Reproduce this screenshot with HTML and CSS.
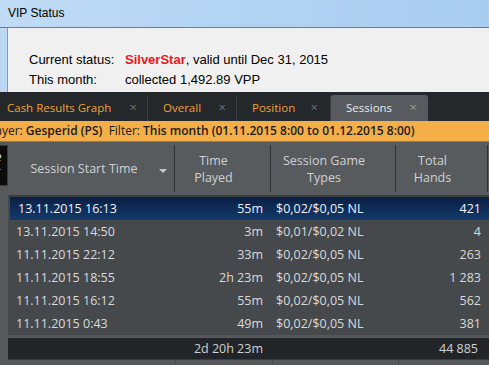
FILE: index.html
```html
<!DOCTYPE html>
<html lang="en">
<head>
  <meta charset="UTF-8">
  <meta name="viewport" content="width=device-width, initial-scale=1.0">
  <title>Sessions</title>
  <link rel="stylesheet" href="styles.css">
</head>
<body>
  <div class="vip">
    <div class="vip-title">VIP Status</div>
    <div class="vip-body">
      <div class="vip-row">
        <span class="vip-label">Current status:</span>
        <span><b class="status">SilverStar</b>, valid until Dec 31, 2015</span>
      </div>
      <div class="vip-row">
        <span class="vip-label">This month:</span>
        <span>collected 1,492.89 VPP</span>
      </div>
    </div>
  </div>

  <div class="tabs">
    <div class="tab first">Cash Results Graph <span class="close">&times;</span></div>
    <div class="tab second">Overall <span class="close">&times;</span></div>
    <div class="tab third">Position <span class="close">&times;</span></div>
    <div class="tab active">Sessions <span class="close">&times;</span></div>
  </div>

  <div class="filter">
    <span class="filter-text">Player: <b>Gesperid (PS)</b> &nbsp;Filter: <b>This month (01.11.2015 8:00 to 01.12.2015 8:00)</b></span>
  </div>

  <div class="grid-area">
    <div class="side">
      <div class="side-tab"><span>Stats</span></div>
    </div>
    <div class="grid">
      <div class="head">
        <div class="hcell c1">Session Start Time <span class="arrow"></span></div>
        <div class="hcell c2">Time<br>Played</div>
        <div class="hcell c3">Session Game<br>Types</div>
        <div class="hcell c4">Total<br>Hands</div>
      </div>
      <div class="rows" id="rows">
        <!-- rows filled by script -->
      </div>
      <div class="row total">
        <div class="cell c1"></div>
        <div class="cell c2 num">2d 20h 23m</div>
        <div class="cell c3"></div>
        <div class="cell c4 num">44 885</div>
      </div>
      <div class="foot">
        <div class="c1"></div>
        <div class="c2"></div>
        <div class="c3"></div>
        <div class="c4"></div>
      </div>
    </div>
  </div>

  <script>
    const sessions = [
      ['13.11.2015 16:13', '55m', '$0,02/$0,05 NL', '421'],
      ['13.11.2015 14:50', '3m', '$0,01/$0,02 NL', '4'],
      ['11.11.2015 22:12', '33m', '$0,02/$0,05 NL', '263'],
      ['11.11.2015 18:55', '2h 23m', '$0,02/$0,05 NL', '1 283'],
      ['11.11.2015 16:12', '55m', '$0,02/$0,05 NL', '562'],
      ['11.11.2015 0:43', '49m', '$0,02/$0,05 NL', '381']
    ];

    const rows = document.getElementById('rows');
    sessions.forEach((s, i) => {
      const row = document.createElement('div');
      row.className = i === 0 ? 'row selected' : 'row';
      row.innerHTML = `
        <div class="cell c1">${s[0]}</div>
        <div class="cell c2 num">${s[1]}</div>
        <div class="cell c3">${s[2]}</div>
        <div class="cell c4 num">${s[3]}</div>
      `;
      rows.appendChild(row);
    });
  </script>
</body>
</html>
```

FILE: styles.css
```css
body {
  margin: 0;
  width: 489px;
  height: 365px;
  overflow: hidden;
  background-color: #56595c;
}

.vip {
  height: 92px;
  background: linear-gradient(90deg, #bcd8f3, #b4d2f1 60%, #a9cbee);
  font-family: "Liberation Sans", Arial, sans-serif;
  color: #000;
}

.vip-title {
  height: 27px;
  line-height: 27px;
  padding-left: 8px;
  font-size: 12px;
  border-bottom: 1px solid #6d7c8c;
  background: linear-gradient(90deg, #c0dbf5, #b3d3f3 50%, #a9cdf0);
}

.vip-body {
  margin-left: 7px;
  height: 64px;
  border-left: 1px solid #8d99a6;
  background-color: #f0f0f0;
  padding-top: 22px;
  box-sizing: border-box;
  font-size: 13px;
}

.vip-row {
  display: flex;
  height: 20px;
  line-height: 20px;
  padding-left: 21px;
}

.vip-label {
  width: 96px;
}

.status {
  color: #ec1620;
}

.tabs {
  display: flex;
  align-items: flex-end;
  height: 29px;
  background-color: #25282b;
  font-family: "Open Sans", sans-serif;
  font-size: 11.5px;
  overflow: hidden;
}

.tab {
  height: 26px;
  line-height: 25px;
  color: #f0a232;
  box-sizing: border-box;
  border-right: 1px solid #3b3e42;
  white-space: nowrap;
  display: flex;
  justify-content: space-between;
}

.tab .close {
  color: #6e7175;
  font-size: 13px;
}

.tab.first {
  width: 148px;
  padding: 0 10px 0 7px;
}

.tab.second {
  width: 89px;
  padding: 0 10px 0 15px;
}

.tab.third {
  width: 94px;
  padding: 0 12px 0 15px;
}

.tab.active {
  width: 97px;
  height: 26px;
  padding: 0 11px 0 15px;
  background-color: #575b5f;
  color: #eaeaea;
  border-radius: 3px 3px 0 0;
  border-right: none;
}

.tab.active .close {
  color: #9a9da0;
}

.filter {
  height: 20px;
  line-height: 20px;
  background-color: #f4af48;
  border-bottom: 1px solid #a8783a;
  overflow: hidden;
  white-space: nowrap;
  font-family: "Open Sans", sans-serif;
  font-size: 12px;
  color: #1b1b1b;
}

.filter-text {
  margin-left: -15px;
}

.filter b {
  font-weight: 600;
}

.grid-area {
  display: flex;
  height: 224px;
  font-family: "Open Sans", sans-serif;
}

.side {
  width: 8px;
  padding-top: 3px;
}

.side-tab {
  width: 8px;
  height: 41px;
  background-color: #0c0c0c;
  border: 1px solid #3a3a3a;
  border-left: none;
  box-sizing: border-box;
  overflow: hidden;
  position: relative;
}

.side-tab span {
  position: absolute;
  left: -14px;
  top: 14px;
  transform: rotate(90deg);
  color: #ffffff;
  font-size: 10px;
  line-height: 10px;
}

.grid {
  flex: 1;
  display: flex;
  flex-direction: column;
}

.c1 { width: 167px; }
.c2 { width: 96px; }
.c3 { width: 125px; }
.c4 { width: 92px; }

.head {
  display: flex;
  height: 55px;
  padding-top: 3px;
  box-sizing: border-box;
  border-bottom: 2px solid #3c3f42;
  background-color: #585b5e;
}

.hcell {
  box-sizing: border-box;
  border-right: 1px solid #2f3235;
  display: flex;
  align-items: center;
  justify-content: center;
  text-align: center;
  padding-right: 18px;
  color: #cfd1d3;
  font-size: 12.5px;
  line-height: 17px;
  margin-bottom: 3px;
}

.hcell.c1 {
  padding-right: 14px;
  position: relative;
}

.arrow {
  position: absolute;
  right: 7px;
  top: 24px;
  border-left: 4px solid transparent;
  border-right: 4px solid transparent;
  border-top: 4px solid #c8cacc;
}

.rows {
  background-color: #46494c;
}

.row {
  display: flex;
  height: 23px;
  line-height: 23px;
  font-size: 12.5px;
  color: #d9dadb;
  white-space: nowrap;
}

.row.selected {
  background: linear-gradient(#0a1f44, #143a6b);
  color: #eef2f8;
  margin-left: 2px;
}

.row.selected .c1 {
  width: 165px;
}

.cell {
  box-sizing: border-box;
}

.cell.c1 {
  padding-left: 8px;
}

.cell.c3 {
  padding-left: 5px;
}

.cell.c2.num {
  text-align: right;
  padding-right: 8px;
}

.cell.c4.num {
  text-align: right;
  padding-right: 7px;
}

.row.total {
  height: 21px;
  line-height: 21px;
  margin-top: 3px;
  background-color: #222528;
  color: #d0d1d2;
}

.row.total .c4 {
  padding-right: 10px;
}

.foot {
  display: flex;
  flex: 1;
  border-top: 1px solid #3a3d40;
}

.foot div {
  border-right: 1px solid #484b4e;
}
```
